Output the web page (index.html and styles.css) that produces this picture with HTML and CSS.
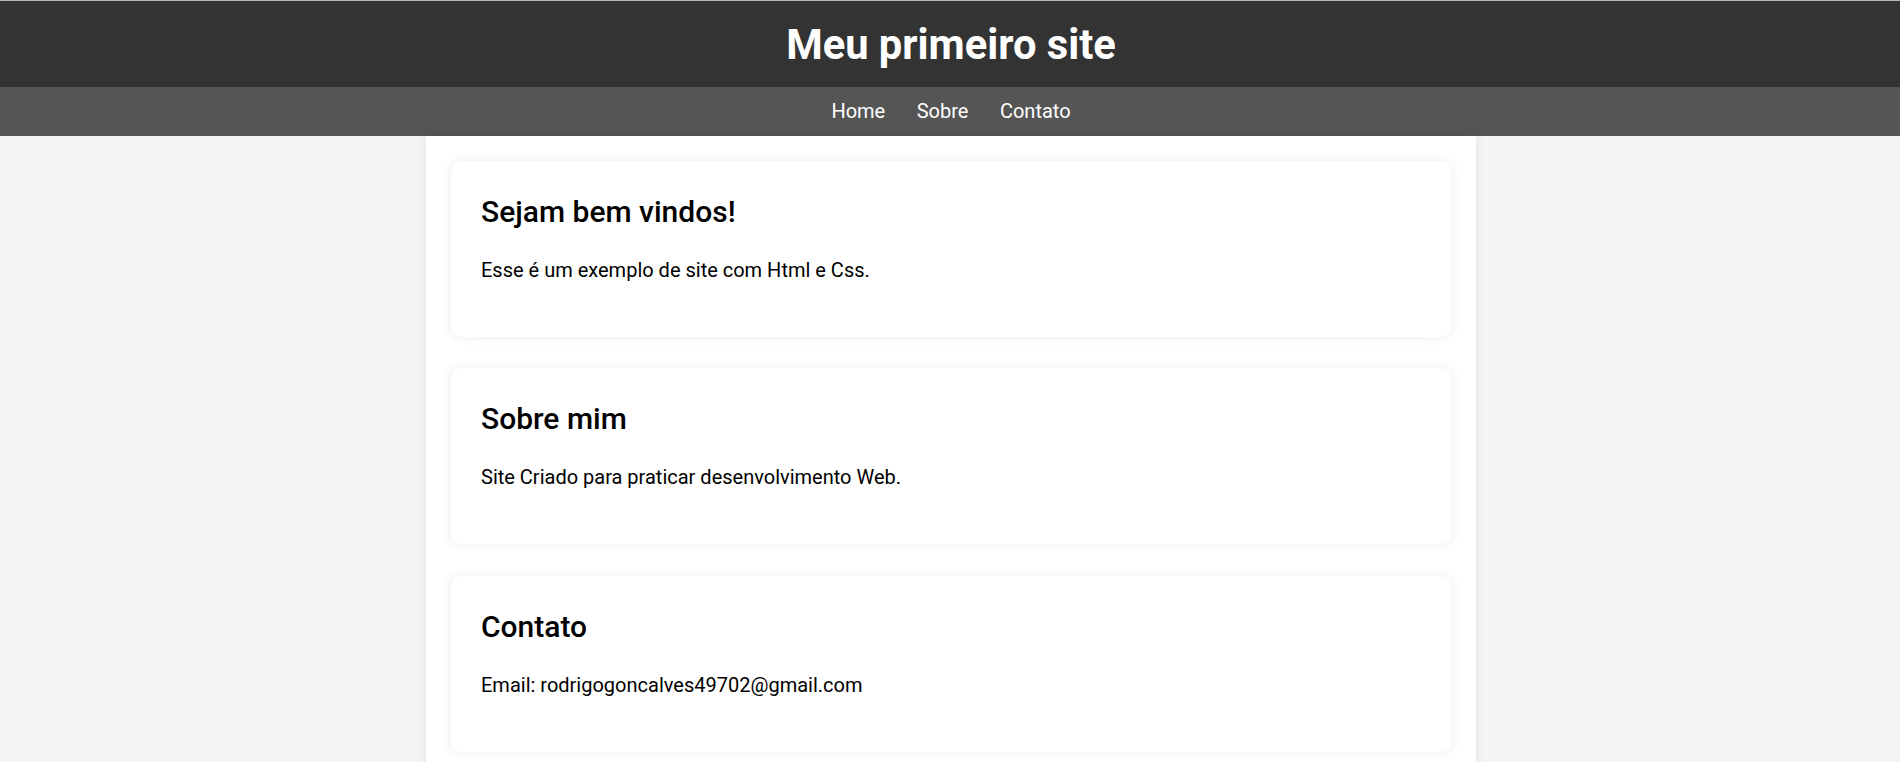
FILE: index.html
```html
<!DOCTYPE html>
<html lang="pt-BR">
<head>
<meta charset="utf-8">
<title>Meu primeiro site</title>
<link rel="stylesheet" href="styles.css">
</head>
<body>
  <header class="site-header">
    <h1 class="site-title">Meu primeiro site</h1>
  </header>
  <nav class="site-nav">
    <a class="nav-link" href="#home">Home</a>
    <a class="nav-link" href="#sobre">Sobre</a>
    <a class="nav-link" href="#contato">Contato</a>
  </nav>
  <main class="container">
    <section class="card" id="home">
      <h2 class="card-title">Sejam bem vindos!</h2>
      <p class="card-text">Esse é um exemplo de site com Html e Css.</p>
    </section>
    <section class="card" id="sobre">
      <h2 class="card-title">Sobre mim</h2>
      <p class="card-text">Site Criado para praticar desenvolvimento Web.</p>
    </section>
    <section class="card" id="contato">
      <h2 class="card-title">Contato</h2>
      <p class="card-text">Email: rodrigogoncalves49702@gmail.com</p>
    </section>
  </main>
</body>
</html>
```
FILE: styles.css
```css
* {
  box-sizing: border-box;
}

html, body {
  margin: 0;
  padding: 0;
}

body {
  font-family: Roboto, "Liberation Sans", Arial, sans-serif;
  background: #f4f5f7;
  color: #000;
  overflow: hidden;
  padding-left: 2px;
}

.site-header {
  background: #333333;
  border-top: 1px solid #b8b8b8;
  height: 87px;
  margin-left: -2px;
  padding-left: 2px;
  display: flex;
  align-items: center;
  justify-content: center;
}

.site-title {
  margin: 0;
  color: #fff;
  font-size: 41.7px;
  font-weight: 700;
  line-height: 47px;
}

.site-nav {
  background: #555555;
  height: 49px;
  margin-left: -2px;
  padding-left: 2px;
  display: flex;
  align-items: center;
  justify-content: center;
  gap: 31.5px;
}

.nav-link {
  color: #fff;
  text-decoration: none;
  font-size: 20px;
  line-height: 23px;
}

.container {
  width: 1050px;
  margin: 0 auto;
  background: #fff;
  padding: 25px 25px 40px;
  box-shadow: 0 0 10px rgba(0, 0, 0, 0.09);
  display: flex;
  flex-direction: column;
  gap: 31.25px;
}

.card {
  background: #fff;
  border-radius: 10px;
  padding: 30px;
  height: 176px;
  box-shadow: 0 0 12px rgba(0, 0, 0, 0.08);
}

.card-title {
  margin: 0;
  font-size: 30px;
  font-weight: 500;
  line-height: 41px;
}

.card-text {
  margin: 24px 0 23px;
  font-size: 20px;
  line-height: 28px;
}
```
